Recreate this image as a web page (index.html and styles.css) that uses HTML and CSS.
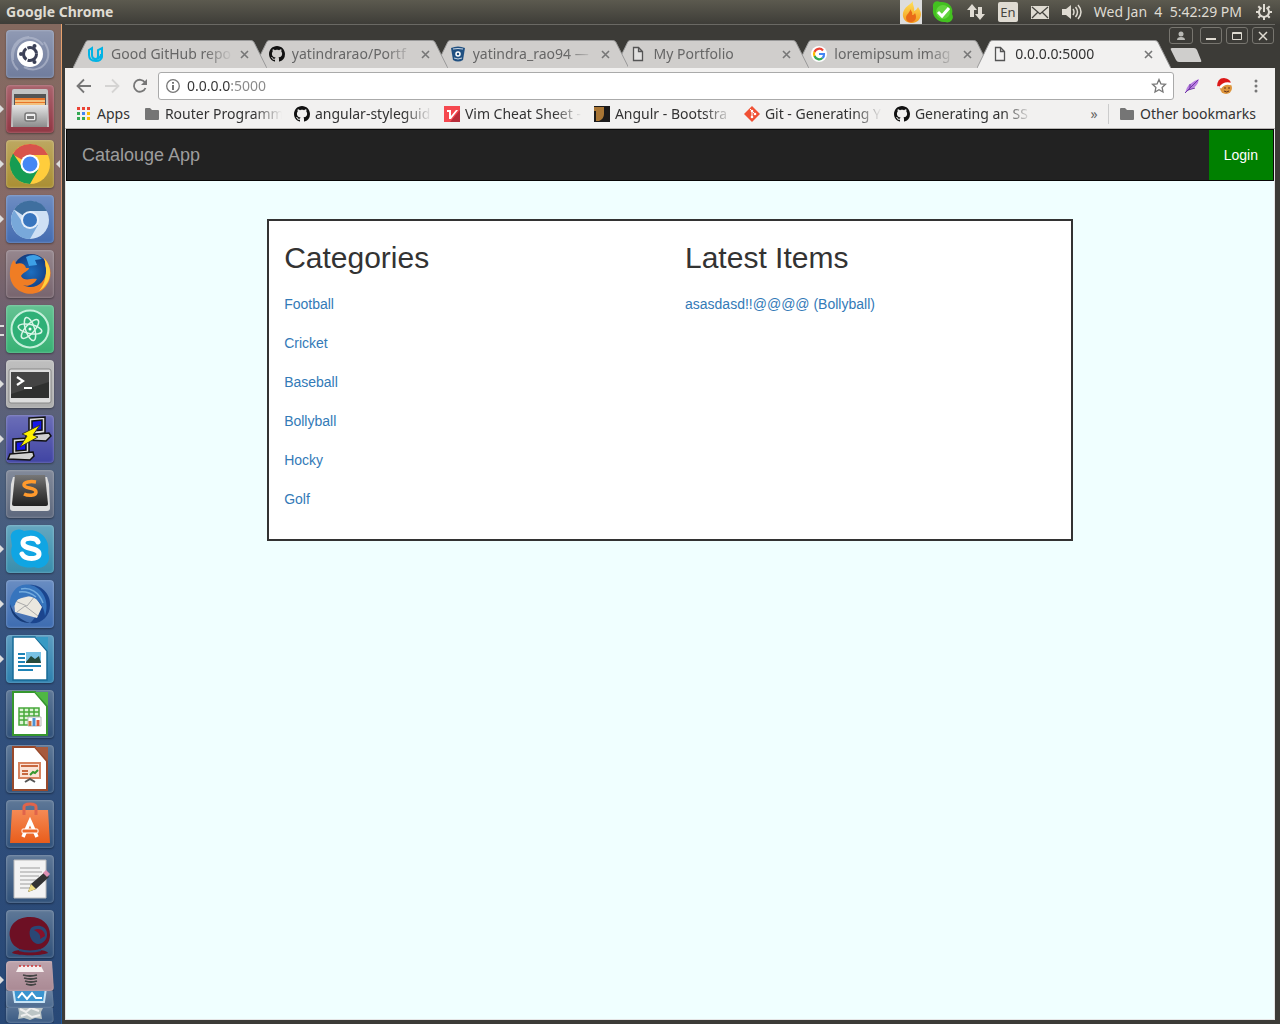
FILE: index.html
```html
<!DOCTYPE html>
<html lang="en">
<head>
<meta charset="utf-8">
<title>Catalouge App</title>
<link rel="stylesheet" href="styles.css">
</head>
<body class="desktop">
<svg class="defs" aria-hidden="true">
  <defs>
    <linearGradient id="flame" x2="0" y2="1"><stop stop-color="#ffe25a"/><stop offset="1" stop-color="#f39a1e"/></linearGradient>
    <linearGradient id="steel" x2="0" y2="1"><stop stop-color="#e6e6e6"/><stop offset="1" stop-color="#8c8c8c"/></linearGradient>
    <linearGradient id="dark" x2="0" y2="1"><stop stop-color="#777"/><stop offset=".5" stop-color="#484848"/><stop offset="1" stop-color="#222"/></linearGradient>
    <linearGradient id="bag" x2="0" y2="1"><stop stop-color="#f58a55"/><stop offset="1" stop-color="#e95d1b"/></linearGradient>
    <radialGradient id="globe"><stop stop-color="#1d6fc0"/><stop offset="1" stop-color="#123c80"/></radialGradient>
    <symbol id="github" viewBox="0 0 16 16"><path d="M8 0C3.58 0 0 3.58 0 8c0 3.54 2.29 6.53 5.47 7.59.4.07.55-.17.55-.38 0-.19-.01-.82-.01-1.49-2.01.37-2.53-.49-2.69-.94-.09-.23-.48-.94-.82-1.13-.28-.15-.68-.52-.01-.53.63-.01 1.08.58 1.23.82.72 1.21 1.87.87 2.33.66.07-.52.28-.87.51-1.07-1.78-.2-3.64-.89-3.64-3.95 0-.87.31-1.59.82-2.15-.08-.2-.36-1.02.08-2.12 0 0 .67-.21 2.2.82.64-.18 1.32-.27 2-.27s1.36.09 2 .27c1.53-1.04 2.2-.82 2.2-.82.44 1.1.16 1.92.08 2.12.51.56.82 1.27.82 2.15 0 3.07-1.87 3.75-3.65 3.95.29.25.54.73.54 1.48 0 1.07-.01 1.93-.01 2.2 0 .21.15.46.55.38A8.01 8.01 0 0 0 16 8c0-4.42-3.58-8-8-8z" fill="#111"/></symbol>
    <symbol id="folder" viewBox="0 0 16 16"><path d="M1 3q0-1 1-1h4l2 2h6q1 0 1 1v8q0 1-1 1H2q-1 0-1-1z" fill="#757575"/></symbol>
    <symbol id="file" viewBox="0 0 16 16"><path d="M3.500 1.500h5l4 4v9h-9zM8.500 1.500v4h4" fill="#f4f4f4" fill-opacity=".5" stroke="#555" stroke-width="1.300"/></symbol>
    <symbol id="shape" viewBox="0 0 194 28" preserveAspectRatio="none"><path d="M0 28 13 1.500Q14 .5 16 .5H178Q180 .5 181 2L194 28" stroke="#999" stroke-width="1"/></symbol>
    <symbol id="cross" viewBox="0 0 9 9"><path d="M1 1l7 7M8 1L1 8" stroke="#777" stroke-width="1.600"/></symbol>
  </defs>
</svg>

<header class="panel">
  <span class="panel-title">Google Chrome</span>
  <div class="tray">
    <svg class="flame" viewBox="0 0 22 24"><path fill="#ddd" d="M0 0h22v24H0z"/><path d="M13 1c-3 4-9 6-10 12-1 6 3 10 9 10 5 0 9-4 9-9 0-3-2-5-3-7-1 2-2 3-4 4 1-4-2-6-1-10z" fill="url(#flame)"/><path d="M10 9c1 3-4 5-4 9 0 3 3 5 6 4 4-1 5-5 3-9-1 2-2 2-3 2 1-3-1-4-2-6z" fill="#e96b18"/></svg>
    <svg class="icon22" viewBox="0 0 22 22"><path d="M1 6C0 2 4-1 8 1c8-1 14 5 12 12 3 5-2 10-7 8C6 22 0 15 1 9z" fill="#43c120"/><circle cx="11" cy="11" r="7" fill="#62d43d"/><path d="m6 11 4 4 7-8" fill="none" stroke="#fff" stroke-width="3"/></svg>
    <svg class="icon20" viewBox="0 0 20 20"><path d="M6 2 1 8h3v7h4V8h3zM14 18l5-6h-3V5h-4v7H9z" fill="#dfdbd2"/></svg>
    <span class="lang">En</span>
    <svg class="icon20" viewBox="0 0 20 20"><path fill="#dfdbd2" d="M1 4h18v13H1z"/><path d="m2 5 8 7 8-7M2 16l6-6M18 16l-6-6" fill="none" stroke="#45443f" stroke-width="1.300"/></svg>
    <svg class="icon20" viewBox="0 0 20 20"><path d="M0 7h4l5-4v14l-5-4H0z" fill="#dfdbd2"/><path d="M11 7q2 3 0 6M13.500 5q4 5 0 10M16 3q6 7 0 14" fill="none" stroke="#dfdbd2" stroke-width="1.500"/></svg>
    <time class="clock">Wed Jan&nbsp; 4&nbsp; 5:42:29 PM</time>
    <svg class="icon16" viewBox="0 0 16 16"><g fill="none" stroke="#dfdbd2"><path d="M5.500 3.600a5 5 0 1 0 5 0M8 0v8" stroke-width="2"/><path d="m2.300 2.300 2 2M0 8h3M2.300 13.700l2-2M8 13v3M13.700 13.700l-2-2M13 8h3M13.700 2.300l-2 2" stroke-width="2"/></g></svg>
  </div>
</header>

<div class="workspace">
  <nav class="launcher" aria-label="Launcher">
    <button class="tile slate" aria-label="Dash"><svg viewBox="0 0 48 48"><path d="M7 30C5 10 25 0 37 15M38 12c12 16-3 34-20 25M12 40C0 28 6 8 23 7" fill="none" stroke="#b9c0d2" stroke-width="2" opacity=".6"/><circle cx="24" cy="24" r="13" fill="#fff"/><circle cx="24" cy="24" r="6.500" fill="none" stroke="#3b4057" stroke-width="3" stroke-dasharray="12.400 1.200"/><g fill="#3b4057"><circle cx="15" cy="24" r="2"/><circle cx="28.500" cy="16" r="2"/><circle cx="28.500" cy="32" r="2"/></g></svg></button>
    <button class="tile maroon running" aria-label="Files"><svg viewBox="0 0 48 48"><path d="M6 6q0-2 2-2h32q2 0 2 2l1 36H5z" fill="#c4c4c4"/><path d="M8 9h32v12H8z" fill="#555"/><path d="M9 13h30v8H9z" fill="#e8752a"/><path d="M9 15h30v2H9z" fill="#f3c17e"/><path d="M9 18h30v2H9z" fill="#f3c17e"/><path d="M6 20h36l-1 22H7z" fill="url(#steel)"/><rect x="19" y="28" width="11" height="8" rx="2" fill="#eee" stroke="#777" stroke-width="1.500"/><path d="M21 31h7v3h-7z" fill="#777"/></svg></button>
    <button class="tile gold running focused" aria-label="Google Chrome"><svg viewBox="0 0 48 48"><circle cx="24" cy="24" r="20" fill="#ffcd3c"/><path d="M24 24 6.500 14.500A20 20 0 0 1 42 15H24z" fill="#d8534b"/><path d="M7 13.500A20 20 0 0 0 24 44l8-14-15-2z" fill="#179c52"/><circle cx="24" cy="24" r="9.500" fill="#fff"/><circle cx="24" cy="24" r="7.500" fill="#4587f4"/></svg></button>
    <button class="tile azure running" aria-label="Chromium"><svg viewBox="0 0 48 48"><circle cx="24" cy="25" r="19" fill="#cfe0f4"/><path d="M24 25 8 14.500A19 19 0 0 1 41 16H24z" fill="#3f6f9f"/><path d="M8 15A19 19 0 0 0 24 44l8-14-15-2z" fill="#78a8da"/><circle cx="24" cy="25" r="9" fill="#e7effa"/><circle cx="24" cy="25" r="7" fill="#3875be"/></svg></button>
    <button class="tile mauve" aria-label="Firefox"><svg viewBox="0 0 48 48"><circle cx="25" cy="22" r="18" fill="url(#globe)"/><path d="M20 7q9-5 16 2l-7 1 2 5-8 1z" fill="#3da0e6"/><path d="M38 8c12 12 6 29-5 34C19 48 2 38 4 21c0-5 2-9 4-11l2 4c5-2 9 0 10 4h3c0 3-6 4-8 8 3 6 10 2 16 3-3 6-10 8-14 6 13 7 25-5 23-17-2-4 0-6-2-10z" fill="#f07d24"/><path d="M38 8c11 12 6 27-5 33 7-8 9-21 5-33z" fill="#ffd23e"/></svg></button>
    <button class="tile green running double" aria-label="Atom"><svg viewBox="0 0 48 48"><circle cx="24" cy="24" r="18.500" fill="#2fb077" stroke="#c5f0db" stroke-width="2"/><g fill="none" stroke="#d9f5e7" stroke-width="1.500"><ellipse cx="24" cy="24" rx="12" ry="4.500" transform="rotate(12 24 24)"/><ellipse cx="24" cy="24" rx="12" ry="4.500" transform="rotate(72 24 24)"/><ellipse cx="24" cy="24" rx="12" ry="4.500" transform="rotate(132 24 24)"/></g><circle cx="24" cy="24" r="1.500" fill="#fff"/></svg></button>
    <button class="tile silver running" aria-label="Terminal"><svg viewBox="0 0 48 48"><rect x="3" y="9" width="42" height="34" rx="2" fill="#ddd" stroke="#888"/><path d="M5 12h38v26H5z" fill="#2f302f"/><path d="M5 12h38v10L5 34z" fill="#444"/><path d="m11 17 6 4-6 4M18 28h8" fill="none" stroke="#fff" stroke-width="2.200"/></svg></button>
    <button class="tile indigo running" aria-label="PuTTY"><svg viewBox="0 0 48 48"><g stroke="#111" stroke-width="1.500"><path d="m23 3 16-1v16l-16 2z" fill="#ddd"/><path d="m26 6 10-1v10l-10 1z" fill="#1717e8"/><path d="m20 20 23-2 2 3-5 5-20-1z" fill="#d0d0d0"/><path d="m7 24 16-1v15L7 40z" fill="#ddd"/><path d="m10 27 10-1v9l-10 1z" fill="#1717e8"/><path d="m4 39 23-2 1 4-4 4-22-1z" fill="#d0d0d0"/></g><path d="m34 10-18 9 5 2-7 11 18-10-5-2z" fill="#fff200" stroke="#333"/></svg></button>
    <button class="tile smoke" aria-label="Sublime Text"><svg viewBox="0 0 48 48"><path d="M5 14 7 7h34l2 7 1 24q0 3-3 3H7q-3 0-3-3z" fill="#ddd"/><path d="M9 5h30l3 29q0 2-2 2H8q-2 0-2-2z" fill="url(#dark)"/><path d="M30 12c-6-1-12 0-12 3 0 4 12 2 12 7 0 4-8 4-12 2" fill="none" stroke="#ff9a2d" stroke-width="3.500"/></svg></button>
    <button class="tile teal running" aria-label="Skype"><svg viewBox="0 0 48 48"><path d="M5 14C3 6 12 2 18 6c15-4 27 8 24 22 4 8-4 18-14 14C14 45 2 35 6 21z" fill="#10a5e3"/><path d="M32 17c-2-5-15-5-15 1 0 7 16 4 16 11 0 6-14 6-17 0" fill="none" stroke="#fff" stroke-width="5" stroke-linecap="round"/></svg></button>
    <button class="tile blue running" aria-label="Thunderbird"><svg viewBox="0 0 48 48"><path d="M15 7C28 0 45 10 44 25c0 12-10 20-20 18 12-8 7-31-9-36z" fill="#1b458e"/><path d="M8 20 28 15l8 12-5 11-22-6z" fill="#eae7df"/><path d="m9 21 12 5 8-10M11 32l8-6 13 10" fill="none" stroke="#aaa"/><path d="M4 28C2 15 11 2 24 5c13 2 20 17 15 31-1-12-9-19-17-20-7 1-12 3-13 9z" fill="#3674bd"/><path d="M15 9c9-2 18 3 22 14M13 12c7-1 12 1 17 5" fill="none" stroke="#74acdf" stroke-width="1.500"/><path d="M4 24c1 14 11 19 20 19C16 41 7 34 4 24z" fill="#163b78"/></svg></button>
    <button class="tile cyan running" aria-label="Writer"><svg viewBox="0 0 48 48"><path d="M7 2h22l12 14v29H7z" fill="#fff" stroke="#176b96" stroke-width="1.500"/><path d="M29 2h13v14z" fill="#379ac4"/><path d="M12 19h7M12 23h7M12 27h7M12 31h23M12 35h15" stroke="#1d83b6" stroke-width="2"/><path d="M20 17h15v11H20z" fill="#79c2e5"/><path d="m20 27 5-6 4 3 4-3 2 7H20z" fill="#26493b"/></svg></button>
    <button class="tile navy" aria-label="Calc"><svg viewBox="0 0 48 48"><path d="M7 2h22l12 14v29H7z" fill="#fff" stroke="#36972e" stroke-width="2"/><path d="M29 2h13v14z" fill="#4fb744"/><path d="M13 18h20v17H13zM13 22h20M13 26h20M13 30h20M18 18v17M23 18v17M28 18v17" fill="#dff4d7" stroke="#48a83b" stroke-width="1.500"/><path d="M22 27h13v9H22z" fill="#fff" stroke="#b5b5b5"/><path d="M24 36v-5" stroke="#ca763b" stroke-width="3"/><path d="M28 36v-8" stroke="#4f8fd0" stroke-width="3"/><path d="M32 36v-6" stroke="#d85a3b" stroke-width="3"/></svg></button>
    <button class="tile navy" aria-label="Impress"><svg viewBox="0 0 48 48"><path d="M7 2h22l12 14v29H7z" fill="#fff" stroke="#99492b" stroke-width="2"/><path d="M29 2h13v14z" fill="#a75a3d"/><path d="M13 18h21v15H13z" fill="#fbe3d7" stroke="#d7835f" stroke-width="2"/><path d="M15 21h17M16 26h6M16 29h6" stroke="#c76840" stroke-width="2"/><path d="m24 30 3-3 2 1 3-3" fill="none" stroke="#36972e" stroke-width="2"/><path d="m19 37 5-3 5 3" fill="none" stroke="#555" stroke-width="2"/></svg></button>
    <button class="tile navy" aria-label="Ubuntu Software"><svg viewBox="0 0 48 48"><path d="M6 10h36l2 33H4z" fill="url(#bag)"/><path d="M18 15V7q0-3 6-3t6 3v8" fill="none" stroke="#e0644b" stroke-width="3"/><path d="m17 37 7-16 7 16" fill="none" stroke="#fff" stroke-width="3.500"/><rect x="16" y="29" width="16" height="4" rx="1" fill="#ee6a2b" stroke="#fff"/></svg></button>
    <button class="tile navy" aria-label="Text Editor"><svg viewBox="0 0 48 48"><path d="M8 5h32v38H8z" fill="#f3f3f3" stroke="#bbb"/><path d="M14 13h20M14 17h22M14 21h19M14 25h16M14 29h12M14 33h10" stroke="#bbb" stroke-width="1.500"/><path d="m22 37 3-8 14-12 4 5-13 12z" fill="#333"/><path d="m22 37 3-8 5 5z" fill="#eedb80"/><path d="m37 18 3-3 4 4-3 3z" fill="#dd90b3"/></svg></button>
    <button class="tile navy" aria-label="Desktop Settings"><svg viewBox="0 0 48 48"><path d="M24 7C9 7 2 17 4 27c1 7 6 11 12 13-6 0-9 1-10 3 7 3 29 3 36 0-1-2-5-3-10-3 7-2 12-7 12-15C44 14 36 7 24 7z" fill="#6d1024"/><path d="M25 18c5-4 15-3 16 5 1 9-8 13-12 10-5-3-7-11-4-15z" fill="#2a4775"/><path d="M28 20c6-3 11 1 11 6l-5 3c1-4-1-6-6-9z" fill="#86112a"/><path d="M13 40q11 3 22 0" fill="none" stroke="#2a4775" stroke-width="2"/></svg></button>
    <button class="tile folded rose running" aria-label="Disk Tool"><svg viewBox="0 0 48 30"><path d="M13 5h22l3 6H10z" fill="#f6eeee"/><path d="M13 5h22" stroke="#c33" stroke-width="1.500" stroke-dasharray="2 2"/><path d="M17 14q7 2 14 0M18 17q7 2 13 0M19 20q6 2 12 0M20 23q5 2 10 0" fill="none" stroke="#444" stroke-width="1.800"/></svg></button>
    <button class="tile folded second" aria-label="System Monitor"><svg viewBox="0 0 48 24"><path d="M7 4h33l-2 14H9z" fill="#3b94cf" stroke="#c7e3f5" stroke-width="2"/><path d="m12 14 4-5 5 6 5-6 4 5h6" fill="none" stroke="#fff" stroke-width="2"/></svg></button>
    <button class="tile folded third" aria-label="Trash"><svg viewBox="0 0 48 24"><path d="m12 8 6-2 6 2 6-2 7 3-2 4 1 7-7-1-5 2-6-2-6 1 1-6z" fill="#bcc5c6"/><path d="m14 10 6 3 5-4 8 3M15 17l6-2 5 3 8-2" stroke="#eee" fill="none" stroke-width="2"/></svg></button>
  </nav>

  <section class="window" aria-label="Browser">
    <div class="titlebar">
      <div class="tabs">
        <div class="tab"><svg class="tab-shape"><use href="#shape"/></svg><svg class="icon16" viewBox="0 0 16 16"><path d="M1 4 4 2v7q0 4 4 4 2 0 2-3V4l4-2v9q-1 4-6 4-7 0-7-6zM8 13q5-1 5-5" fill="none" stroke="#02b3e4" stroke-width="2"/></svg><span class="tab-name">Good GitHub repo</span><button class="close" aria-label="Close tab"><svg><use href="#cross"/></svg></button></div>
        <div class="tab"><svg class="tab-shape"><use href="#shape"/></svg><svg class="icon16"><use href="#github"/></svg><span class="tab-name">yatindrarao/Portf</span><button class="close" aria-label="Close tab"><svg><use href="#cross"/></svg></button></div>
        <div class="tab"><svg class="tab-shape"><use href="#shape"/></svg><svg class="icon16" viewBox="0 0 16 16"><path d="M1 2q7-3 14 0l-2 12q-5 3-10 0z" fill="#205081"/><path d="M3 3q5-1 10 0M4 12q4 2 8 0" stroke="#c9d6e4" fill="none"/><circle cx="8" cy="8" r="2" fill="none" stroke="#fff" stroke-width="1.500"/></svg><span class="tab-name">yatindra_rao94 —</span><button class="close" aria-label="Close tab"><svg><use href="#cross"/></svg></button></div>
        <div class="tab"><svg class="tab-shape"><use href="#shape"/></svg><svg class="icon16"><use href="#file"/></svg><span class="tab-name">My Portfolio</span><button class="close" aria-label="Close tab"><svg><use href="#cross"/></svg></button></div>
        <div class="tab"><svg class="tab-shape"><use href="#shape"/></svg><svg class="icon16" viewBox="0 0 16 16"><circle cx="8" cy="8" r="8" fill="#fff"/><g fill="none" stroke-width="2.200"><path d="M12 4.500A5 5 0 0 0 3.500 6" stroke="#ea4335"/><path d="M3.500 5.800a5 5 0 0 0 0 4.400" stroke="#fbbc05"/><path d="M3.500 10a5 5 0 0 0 8 2" stroke="#34a853"/><path d="M11.500 12A5 5 0 0 0 13 8H8" stroke="#4285f4"/></g></svg><span class="tab-name">loremipsum imag</span><button class="close" aria-label="Close tab"><svg><use href="#cross"/></svg></button></div>
        <div class="tab active"><svg class="tab-shape"><use href="#shape"/></svg><svg class="icon16"><use href="#file"/></svg><span class="tab-name">0.0.0.0:5000</span><button class="close" aria-label="Close tab"><svg><use href="#cross"/></svg></button></div>
      </div>
      <div class="corner">
        <div class="controls">
          <button class="control profile" aria-label="Profile"><svg viewBox="0 0 16 12"><circle cx="8" cy="4" r="2.500" fill="#b9b9b5"/><path d="M4 10q0-3 4-3t4 3z" fill="#b9b9b5"/></svg></button>
          <button class="control" aria-label="Minimize"><svg viewBox="0 0 16 12"><path d="M3 9h10" stroke="#dfdbd2" stroke-width="2"/></svg></button>
          <button class="control" aria-label="Maximize"><svg viewBox="0 0 16 12"><path d="M3.500 2.500h9v7h-9zM3 3.500h10" fill="none" stroke="#dfdbd2"/></svg></button>
          <button class="control" aria-label="Close"><svg viewBox="0 0 16 12"><path d="m4 2 8 8M12 2l-8 8" stroke="#dfdbd2" stroke-width="1.500"/></svg></button>
        </div>
        <button class="new-tab" aria-label="New tab"><svg viewBox="0 0 33 16"><path d="M3 1h22q2 0 3 2l4 10q1 2-1 2H10q-2 0-3-2L2 3Q1 1 3 1z" fill="#cfcecc"/></svg></button>
      </div>
    </div>

    <div class="toolbar">
      <button class="tool" aria-label="Back"><svg viewBox="0 0 16 16"><path d="M15 8H2M8 1.500 1.500 8 8 14.500" fill="none" stroke="#777" stroke-width="1.800"/></svg></button>
      <button class="tool" aria-label="Forward"><svg viewBox="0 0 16 16"><path d="M1 8h13M8 1.500 14.500 8 8 14.500" fill="none" stroke="#d5d4d3" stroke-width="1.800"/></svg></button>
      <button class="tool" aria-label="Reload"><svg viewBox="0 0 16 16"><path d="M13.500 10A6 6 0 1 1 13 4.500" fill="none" stroke="#777" stroke-width="1.800"/><path d="M15 1v6H9z" fill="#777"/></svg></button>
      <form class="omnibox">
        <svg class="icon16" viewBox="0 0 16 16"><circle cx="8" cy="8" r="6.300" fill="none" stroke="#777" stroke-width="1.300"/><path d="M8 7v5M8 4v1.700" stroke="#666" stroke-width="1.800"/></svg>
        <input class="address" type="text" aria-label="Address" value="0.0.0.0:5000">
        <svg class="icon16" viewBox="0 0 16 16"><path d="m8 1.500 1.900 4.300 4.600.5-3.400 3.100.9 4.600-4-2.300L4 14l.9-4.600L1.500 6.300l4.600-.5z" fill="none" stroke="#777" stroke-width="1.300"/></svg>
      </form>
      <svg class="icon16" viewBox="0 0 16 16"><path d="M1 15Q3 5 15 1q-1 8-10 11z" fill="#b77ddf"/><path d="M1 15 14 2M4 12l7-2M6 10V6" stroke="#6d35a3"/></svg>
      <svg class="icon16" viewBox="0 0 16 16"><circle cx="10" cy="10" r="6" fill="#dd953c"/><path d="M1 9Q1 0 8 0q7 1 7 6-7-2-11 5z" fill="#dc1818"/><path d="M4 10q4-6 11-4" fill="none" stroke="#fff" stroke-width="2.500"/><circle cx="2" cy="10" r="2" fill="#eee"/><path d="M9 9v2M13 9v2M8 13q3 2 5 0" fill="none" stroke="#65351b"/></svg>
      <button class="tool" aria-label="Menu"><svg viewBox="0 0 16 16"><g fill="#777"><circle cx="8" cy="3" r="1.500"/><circle cx="8" cy="8" r="1.500"/><circle cx="8" cy="13" r="1.500"/></g></svg></button>
    </div>

    <nav class="bookmarks" aria-label="Bookmarks">
      <a class="mark apps" href="#apps"><svg class="icon16" viewBox="0 0 16 16"><path d="M0 1h3v3H0zM5 1h3v3H5zM10 1h3v3h-3z" fill="#ea4335"/><path d="M0 6h3v3H0zM0 11h3v3H0z" fill="#34a853"/><path d="M5 6h3v3H5z" fill="#4285f4"/><path d="M10 6h3v3h-3zM10 11h3v3h-3z" fill="#fbbc05"/><path d="M5 11h3v3H5z" fill="#34a853"/></svg><span>Apps</span></a>
      <div class="marks">
        <a class="mark" href="#router"><svg class="icon16"><use href="#folder"/></svg><span class="mark-name">Router Programm</span></a>
        <a class="mark" href="#styleguide"><svg class="icon16"><use href="#github"/></svg><span class="mark-name">angular-styleguid</span></a>
        <a class="mark" href="#vim"><svg class="icon16" viewBox="0 0 16 16"><path d="M0 0h16v16H0z" fill="#f5484f"/><path d="m16 4v12H6z" fill="#b92d3a"/><path d="M3 4h4v6l5-6h2L7 13H5V6H3z" fill="#fff"/></svg><span class="mark-name">Vim Cheat Sheet -</span></a>
        <a class="mark" href="#angulr"><svg class="icon16" viewBox="0 0 16 16"><path d="M0 0h16v16H0z" fill="#1b1a1a"/><path d="M0 1h10v7q0 5-5 7H2V5H0z" fill="#a87534"/></svg><span class="mark-name">Angulr - Bootstra</span></a>
        <a class="mark" href="#git"><svg class="icon16" viewBox="0 0 16 16"><path d="m8 0 8 8-8 8-8-8z" fill="#f05033"/><path d="m6 3 2 2v7M8 5l3 3" stroke="#fff" fill="none"/><g fill="#fff"><circle cx="8" cy="5" r="1.300"/><circle cx="8" cy="11" r="1.300"/><circle cx="11" cy="8" r="1.300"/></g></svg><span class="mark-name">Git - Generating Y</span></a>
        <a class="mark" href="#ssh"><svg class="icon16"><use href="#github"/></svg><span class="mark-name">Generating an SS</span></a>
      </div>
      <button class="more" aria-label="More bookmarks">»</button>
      <a class="mark other" href="#other"><svg class="icon16"><use href="#folder"/></svg><span>Other bookmarks</span></a>
    </nav>

    <main class="page">
      <nav class="navbar"><a class="brand" href="#home">Catalouge App</a><a class="login" href="#login">Login</a></nav>
      <div class="card">
        <section class="column">
          <h2 class="heading">Categories</h2>
          <ul class="items">
            <li><a href="#football">Football</a></li>
            <li><a href="#cricket">Cricket</a></li>
            <li><a href="#baseball">Baseball</a></li>
            <li><a href="#bollyball">Bollyball</a></li>
            <li><a href="#hocky">Hocky</a></li>
            <li><a href="#golf">Golf</a></li>
          </ul>
        </section>
        <section class="column">
          <h2 class="heading">Latest Items</h2>
          <ul class="items"><li><a href="#latest">asasdasd!!@@@@ (Bollyball)</a></li></ul>
        </section>
      </div>
    </main>
  </section>
</div>
</body>
</html>
```

FILE: styles.css
```css
* { box-sizing: border-box; }
button { padding: 0; border: 0; background: none; font: inherit; color: inherit; }
svg { display: block; flex: none; }
a { text-decoration: none; }
ul { list-style: none; margin: 0; padding: 0; }

.desktop {
  display: flex;
  flex-direction: column;
  min-height: 100vh;
  margin: 0;
  font: 14px/20px "Noto Sans", "Open Sans", sans-serif;
  background: #3c3b37;
}
.defs { position: absolute; width: 0; height: 0; }
.icon16 { width: 16px; height: 16px; }
.icon20 { width: 20px; height: 20px; }
.icon22 { width: 22px; height: 22px; }

/* Top panel */
.panel {
  display: flex;
  align-items: center;
  justify-content: space-between;
  height: 24px;
  padding: 0 8px 0 6px;
  color: #dfdbd2;
  background: linear-gradient(#5c5a4f, #3e3d38);
}
.panel-title { font-size: 14px; font-weight: bold; }
.tray { display: flex; align-items: center; gap: 12px; }
.flame { width: 22px; height: 24px; margin-right: -2px; }
.lang {
  width: 20px;
  border-radius: 2px;
  color: #45443f;
  background: #dfdbd2;
  font-size: 13px;
  text-align: center;
}
.clock { margin-right: 2px; white-space: nowrap; }

/* Launcher */
.workspace { display: flex; flex: 1; }
.launcher {
  display: flex;
  flex: none;
  flex-direction: column;
  gap: 7px;
  width: 62px;
  padding: 6px 0 0 6px;
  border-right: 1px solid #2c5f9c;
  border-image: linear-gradient(#e9a36d, #c48a72 25%, #5b7c9c 40%, #1f5aa0) 1;
  background: linear-gradient(#84695f, #866a68 20%, #6b5f70 30%, #4f627f 45%, #34527e 62%, #284876);
}
.tile {
  position: relative;
  width: 48px;
  height: 48px;
  border-radius: 4px;
  box-shadow: inset 0 0 2px 1px #ffffff30, 0 1px 2px #00000060;
  background: linear-gradient(#ffffff40, #ffffff08) var(--tint, transparent);
}
.tile svg { width: 100%; height: 100%; }
.slate { --tint: #6b789a; }
.maroon { --tint: #8d303d; }
.gold { --tint: #a78b2c; }
.azure { --tint: #3e67ae; }
.mauve { --tint: #735f69; }
.green { --tint: #31ae6f; }
.silver { --tint: #aaa; }
.indigo { --tint: #3a3ea0; }
.smoke { --tint: #586379; }
.teal { --tint: #328aaa; }
.blue { --tint: #3767ae; }
.cyan { --tint: #267cac; }
.navy { --tint: #294b75; }
.rose { --tint: #a78590; }
.running::before, .focused::after {
  content: "";
  position: absolute;
  top: 20px;
  left: -6px;
  border: 4px solid transparent;
  border-left-color: #ddd;
  border-right-width: 0;
}
.focused::after {
  left: 50px;
  border-width: 4px 4px 4px 0;
  border-right-color: #ddd;
}
.double::before {
  width: 4px;
  height: 7px;
  border-width: 2px 0;
  border-color: #ddd;
}
.folded { z-index: 3; height: 30px; margin-top: -4px; clip-path: polygon(-6px 0, 46px 0, 48px 100%, -6px 100%); }
.folded.running::before { top: 15px; }
.second { --tint: #46658c; z-index: 2; height: 24px; margin-top: -14px; }
.third { --tint: #34557f; z-index: 1; height: 24px; margin-top: -16px; }

/* Browser window */
.window {
  display: flex;
  flex: 1;
  flex-direction: column;
  min-width: 0;
  border: solid #3c3b37;
  border-width: 0 5px 4px 3px;
  background: #f2f1f0;
}
.titlebar {
  display: flex;
  height: 44px;
  border-top: 1px solid #6a6964;
  background: #3c3b37;
}
.tabs { display: flex; flex: 1; align-items: flex-end; min-width: 0; padding-left: 8px; }
.tab {
  position: relative;
  z-index: 1;
  display: flex;
  flex: 0 1 194px;
  align-items: center;
  gap: 7px;
  min-width: 0;
  height: 28px;
  padding: 0 18px 0 15px;
  color: #666;
}
.tab:nth-child(1) { z-index: 5; }
.tab:nth-child(2) { z-index: 4; }
.tab:nth-child(3) { z-index: 3; }
.tab:nth-child(4) { z-index: 2; }
.tab + .tab { margin-left: -13px; }
.tab > * { position: relative; }
.tab > .tab-shape { position: absolute; inset: 0; width: 100%; height: 100%; fill: #d0cecc; }
.tab.active { z-index: 6; color: #333; }
.active > .tab-shape { fill: #f2f1f0; }
.tab-name, .mark-name {
  flex: 1;
  min-width: 0;
  overflow: hidden;
  white-space: nowrap;
  mask-image: linear-gradient(to left, transparent, #000 28px);
}
.close, .close svg { width: 9px; height: 9px; }
.corner { display: flex; flex: none; flex-direction: column; gap: 3px; width: 106px; margin-left: -2px; padding-top: 2px; }
.controls { display: flex; gap: 4px; }
.control {
  display: grid;
  place-items: center;
  width: 22px;
  height: 17px;
  border: 1px solid #77756f;
  border-radius: 3px;
}
.control svg { width: 16px; height: 12px; }
.profile { width: 24px; margin-right: 3px; }
.new-tab, .new-tab svg { width: 33px; height: 16px; }

.toolbar {
  display: flex;
  align-items: center;
  gap: 12px;
  height: 36px;
  padding: 0 11px;
}
.tool, .tool svg { width: 16px; height: 16px; }
.toolbar > .icon16 + .icon16 { margin: 0 4px; }
.omnibox {
  display: flex;
  flex: 1;
  align-items: center;
  gap: 6px;
  height: 28px;
  margin: 0 -2px;
  padding: 0 6px;
  border: 1px solid #aaa;
  border-radius: 3px;
  background: #fff;
}
.address {
  flex: 1;
  min-width: 0;
  padding: 0;
  border: 0;
  outline: 0;
  font: inherit;
  color: transparent;
  background: linear-gradient(to right, #333 43px, #888 43px) text;
}
.bookmarks {
  display: flex;
  align-items: center;
  height: 25px;
  padding: 0 15px 4px 12px;
  border-bottom: 1px solid #b6b4b2;
  white-space: nowrap;
}
.mark { display: flex; align-items: center; gap: 5px; color: #333; }
.apps { gap: 4px; margin-right: 14px; }
.marks { display: flex; flex: 1; gap: 12px; min-width: 0; }
.marks .mark { flex: 0 1 138px; min-width: 0; }
.more { width: 12px; margin-right: 8px; color: #666; }
.other { min-width: 152px; padding-left: 10px; border-left: 1px solid #ccc; }

/* Catalogue page */
.page {
  flex: 1;
  border: 1px solid #e4e4e4;
  border-width: 0 1px 1px;
  font: 14px/20px "Liberation Sans", Arial, sans-serif;
  background: #f0ffff;
}
.navbar {
  display: flex;
  justify-content: space-between;
  height: 52px;
  border: 1px solid #080808;
  background: #222;
}
.brand, .login { display: flex; align-items: center; padding: 0 15px; }
.brand { font-size: 18px; color: #9d9d9d; }
.login { color: #fff; background: #008000; }
.card {
  display: flex;
  width: 66.7%;
  margin: 38px auto;
  padding-bottom: 21px;
  border: 2px solid #333;
  background: #fff;
}
.column { flex: 1; padding: 0 15px; }
.heading { margin: 20px 0 10px; font-size: 30px; font-weight: normal; line-height: 33px; color: #333; }
.items li { padding: 10px 0 9px; line-height: 20px; }
.items a { color: #337ab7; }
```
